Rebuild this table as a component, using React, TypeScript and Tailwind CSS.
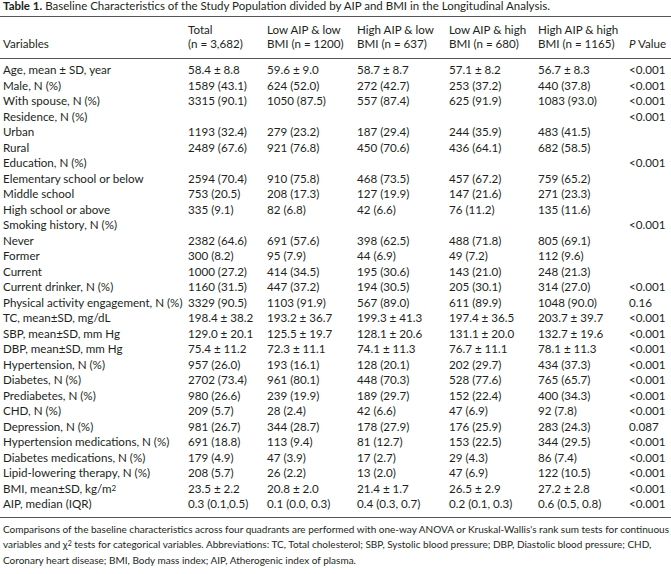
import React from "react";

type Row = { label: React.ReactNode; vals?: string[]; p?: string };

const rows: Row[] = [
  { label: "Age, mean ± SD, year", vals: ["58.4 ± 8.8", "59.6 ± 9.0", "58.7 ± 8.7", "57.1 ± 8.2", "56.7 ± 8.3"], p: "<0.001" },
  { label: "Male, N (%)", vals: ["1589 (43.1)", "624 (52.0)", "272 (42.7)", "253 (37.2)", "440 (37.8)"], p: "<0.001" },
  { label: "With spouse, N (%)", vals: ["3315 (90.1)", "1050 (87.5)", "557 (87.4)", "625 (91.9)", "1083 (93.0)"], p: "<0.001" },
  { label: "Residence, N (%)", p: "<0.001" },
  { label: "Urban", vals: ["1193 (32.4)", "279 (23.2)", "187 (29.4)", "244 (35.9)", "483 (41.5)"] },
  { label: "Rural", vals: ["2489 (67.6)", "921 (76.8)", "450 (70.6)", "436 (64.1)", "682 (58.5)"] },
  { label: "Education, N (%)", p: "<0.001" },
  { label: "Elementary school or below", vals: ["2594 (70.4)", "910 (75.8)", "468 (73.5)", "457 (67.2)", "759 (65.2)"] },
  { label: "Middle school", vals: ["753 (20.5)", "208 (17.3)", "127 (19.9)", "147 (21.6)", "271 (23.3)"] },
  { label: "High school or above", vals: ["335 (9.1)", "82 (6.8)", "42 (6.6)", "76 (11.2)", "135 (11.6)"] },
  { label: "Smoking history, N (%)", p: "<0.001" },
  { label: "Never", vals: ["2382 (64.6)", "691 (57.6)", "398 (62.5)", "488 (71.8)", "805 (69.1)"] },
  { label: "Former", vals: ["300 (8.2)", "95 (7.9)", "44 (6.9)", "49 (7.2)", "112 (9.6)"] },
  { label: "Current", vals: ["1000 (27.2)", "414 (34.5)", "195 (30.6)", "143 (21.0)", "248 (21.3)"] },
  { label: "Current drinker, N (%)", vals: ["1160 (31.5)", "447 (37.2)", "194 (30.5)", "205 (30.1)", "314 (27.0)"], p: "<0.001" },
  { label: "Physical activity engagement, N (%)", vals: ["3329 (90.5)", "1103 (91.9)", "567 (89.0)", "611 (89.9)", "1048 (90.0)"], p: "0.16" },
  { label: "TC, mean±SD, mg/dL", vals: ["198.4 ± 38.2", "193.2 ± 36.7", "199.3 ± 41.3", "197.4 ± 36.5", "203.7 ± 39.7"], p: "<0.001" },
  { label: "SBP, mean±SD, mm Hg", vals: ["129.0 ± 20.1", "125.5 ± 19.7", "128.1 ± 20.6", "131.1 ± 20.0", "132.7 ± 19.6"], p: "<0.001" },
  { label: "DBP, mean±SD, mm Hg", vals: ["75.4 ± 11.2", "72.3 ± 11.1", "74.1 ± 11.3", "76.7 ± 11.1", "78.1 ± 11.3"], p: "<0.001" },
  { label: "Hypertension, N (%)", vals: ["957 (26.0)", "193 (16.1)", "128 (20.1)", "202 (29.7)", "434 (37.3)"], p: "<0.001" },
  { label: "Diabetes, N (%)", vals: ["2702 (73.4)", "961 (80.1)", "448 (70.3)", "528 (77.6)", "765 (65.7)"], p: "<0.001" },
  { label: "Prediabetes, N (%)", vals: ["980 (26.6)", "239 (19.9)", "189 (29.7)", "152 (22.4)", "400 (34.3)"], p: "<0.001" },
  { label: "CHD, N (%)", vals: ["209 (5.7)", "28 (2.4)", "42 (6.6)", "47 (6.9)", "92 (7.8)"], p: "<0.001" },
  { label: "Depression, N (%)", vals: ["981 (26.7)", "344 (28.7)", "178 (27.9)", "176 (25.9)", "283 (24.3)"], p: "0.087" },
  { label: "Hypertension medications, N (%)", vals: ["691 (18.8)", "113 (9.4)", "81 (12.7)", "153 (22.5)", "344 (29.5)"], p: "<0.001" },
  { label: "Diabetes medications, N (%)", vals: ["179 (4.9)", "47 (3.9)", "17 (2.7)", "29 (4.3)", "86 (7.4)"], p: "<0.001" },
  { label: "Lipid-lowering therapy, N (%)", vals: ["208 (5.7)", "26 (2.2)", "13 (2.0)", "47 (6.9)", "122 (10.5)"], p: "<0.001" },
  {
    label: (
      <>
        BMI, mean±SD, kg/m<sup className="text-[8px] leading-none relative -top-[2px]">2</sup>
      </>
    ),
    vals: ["23.5 ± 2.2", "20.8 ± 2.0", "21.4 ± 1.7", "26.5 ± 2.9", "27.2 ± 2.8"],
    p: "<0.001",
  },
  { label: "AIP, median (IQR)", vals: ["0.3 (0.1,0.5)", "0.1 (0.0, 0.3)", "0.4 (0.3, 0.7)", "0.2 (0.1, 0.3)", "0.6 (0.5, 0.8)"], p: "<0.001" },
];

const grid = "grid grid-cols-[185px_79px_90px_92px_89px_91px_42px]";

export default function App() {
  return (
    <div className="w-[671px] h-[574px] bg-white text-[#231f20] font-['Lato',sans-serif] text-[11.6px] overflow-hidden">
      {/* titulo */}
      <div className="pl-[3px] text-[11.5px] leading-[12px] whitespace-nowrap">
        <span className="font-bold">Table 1.</span> Baseline Characteristics of the Study Population divided by AIP and BMI in the Longitudinal Analysis.
      </div>

      <div className="mt-[4px] border-t-[1.5px] border-[#555]" />

      {/* cabecalho */}
      <div className={`${grid} pl-[3px] pt-[6px] pb-[7px] leading-[14px] items-end whitespace-nowrap`}>
        <div>Variables</div>
        <div>Total<br />(n = 3,682)</div>
        <div>Low AIP &amp; low<br />BMI (n = 1200)</div>
        <div>High AIP &amp; low<br />BMI (n = 637)</div>
        <div>Low AIP &amp; high<br />BMI (n = 680)</div>
        <div>High AIP &amp; high<br />BMI (n = 1165)</div>
        <div><i>P</i> Value</div>
      </div>

      <div className="border-t-[1.5px] border-[#555]" />

      {/* linhas */}
      <div className="pl-[3px] pt-[3px] pb-[5px]">
        {rows.map((r, i) => (
          <div key={i} className={`${grid} h-[15.5px] leading-[15.5px] whitespace-nowrap`}>
            <div>{r.label}</div>
            {[0, 1, 2, 3, 4].map((j) => (
              <div key={j}>{r.vals ? r.vals[j] : ""}</div>
            ))}
            <div>{r.p ?? ""}</div>
          </div>
        ))}
      </div>

      <div className="border-t-[1.5px] border-[#555]" />

      {/* nota de rodape */}
      <div className="pl-[3px] pt-[4px] text-[10px] leading-[15.5px] whitespace-nowrap">
        Comparisons of the baseline characteristics across four quadrants are performed with one-way ANOVA or Kruskal-Wallis's rank sum tests for continuous
        <br />
        variables and χ<sup className="text-[7px] leading-none relative -top-[2px]">2</sup> tests for categorical variables. Abbreviations: TC, Total cholesterol; SBP, Systolic blood pressure; DBP, Diastolic blood pressure; CHD,
        <br />
        Coronary heart disease; BMI, Body mass index; AIP, Atherogenic index of plasma.
      </div>
    </div>
  );
}
